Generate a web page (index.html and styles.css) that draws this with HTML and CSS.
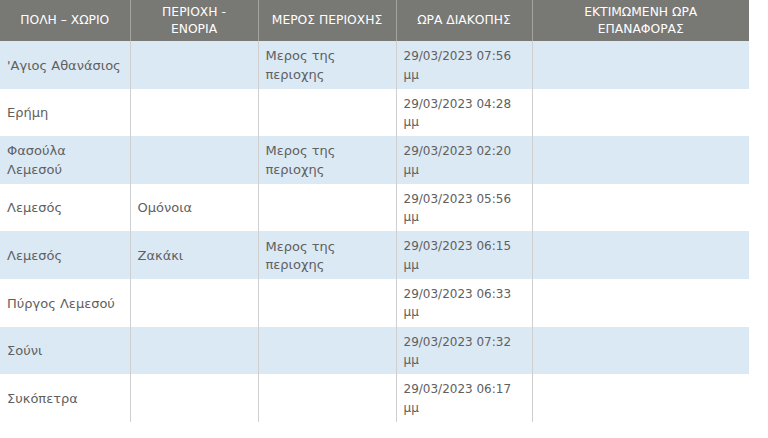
FILE: index.html
```html
<!DOCTYPE html>
<html lang="el">
<head>
<meta charset="utf-8">
<title>Διακοπές</title>
<link rel="stylesheet" href="styles.css">
</head>
<body>
<table class="outages">
  <colgroup>
    <col class="c1"><col class="c2"><col class="c3"><col class="c4"><col class="c5">
  </colgroup>
  <thead>
    <tr>
      <th>ΠΟΛΗ – ΧΩΡΙΟ</th>
      <th>ΠΕΡΙΟΧΗ -<br>ΕΝΟΡΙΑ</th>
      <th>ΜΕΡΟΣ ΠΕΡΙΟΧΗΣ</th>
      <th>ΩΡΑ ΔΙΑΚΟΠΗΣ</th>
      <th>ΕΚΤΙΜΩΜΕΝΗ ΩΡΑ<br>ΕΠΑΝΑΦΟΡΑΣ</th>
    </tr>
  </thead>
  <tbody>
    <tr class="alt"><td>'Αγιος Αθανάσιος</td><td></td><td>Μερος της<br>περιοχης</td><td class="date">29/03/2023 07:56<br>μμ</td><td></td></tr>
    <tr><td>Ερήμη</td><td></td><td></td><td class="date">29/03/2023 04:28<br>μμ</td><td></td></tr>
    <tr class="alt"><td>Φασούλα<br>Λεμεσού</td><td></td><td>Μερος της<br>περιοχης</td><td class="date">29/03/2023 02:20<br>μμ</td><td></td></tr>
    <tr><td>Λεμεσός</td><td>Ομόνοια</td><td></td><td class="date">29/03/2023 05:56<br>μμ</td><td></td></tr>
    <tr class="alt"><td>Λεμεσός</td><td>Ζακάκι</td><td>Μερος της<br>περιοχης</td><td class="date">29/03/2023 06:15<br>μμ</td><td></td></tr>
    <tr><td>Πύργος Λεμεσού</td><td></td><td></td><td class="date">29/03/2023 06:33<br>μμ</td><td></td></tr>
    <tr class="alt"><td>Σούνι</td><td></td><td></td><td class="date">29/03/2023 07:32<br>μμ</td><td></td></tr>
    <tr><td>Συκόπετρα</td><td></td><td></td><td class="date">29/03/2023 06:17<br>μμ</td><td></td></tr>
  </tbody>
</table>
</body>
</html>
```
FILE: styles.css
```css
html, body {
  margin: 0;
  padding: 0;
  background: #ffffff;
}
body {
  font-family: "DejaVu Sans", "Noto Sans", sans-serif;
  color: #606060;
}
.outages {
  border-collapse: collapse;
  table-layout: fixed;
  width: 749px;
  font-size: 13px;
}
.c1 { width: 130px; }
.c2 { width: 128px; }
.c3 { width: 138px; }
.c4 { width: 136px; }
.c5 { width: 217px; }
.outages th {
  background: #787875;
  color: #ffffff;
  font-weight: normal;
  font-size: 12.3px;
  line-height: 17px;
  height: 41px;
  box-sizing: border-box;
  padding: 0 6px;
  text-align: center;
  vertical-align: middle;
  border-left: 1px solid #a3a3a0;
}
.outages th:first-child { border-left: none; }
.outages td {
  height: 47.6px;
  box-sizing: border-box;
  padding: 4px 7px 2px;
  line-height: 18.5px;
  vertical-align: middle;
  border-left: 1px solid #cfcfcf;
  text-align: left;
}
.outages td:first-child { border-left: none; }
.outages td.date {
  vertical-align: top;
  font-size: 12px;
  padding-top: 6px;
  padding-bottom: 0;
}
.outages tr.alt td { background: #dbe9f4; }
```
